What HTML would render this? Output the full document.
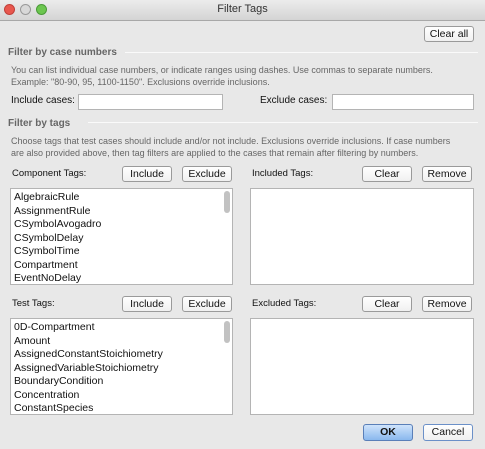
<!DOCTYPE html><html><head><style>
*{margin:0;padding:0;box-sizing:border-box}
body{width:485px;height:449px;background:#e8e8e8;font-family:"Liberation Sans",sans-serif;font-size:10px;color:#111;position:relative;overflow:hidden}
.a{position:absolute;white-space:nowrap}
.tb{position:absolute;left:0;top:0;width:485px;height:21px;background:linear-gradient(#ececec,#d4d4d4);border-bottom:1px solid #a8a8a8;text-align:center;line-height:19px;font-size:11px;color:#333}
.dot{position:absolute;top:4px;width:11px;height:11px;border-radius:50%;border:1px solid #999}
.btn{position:absolute;height:16px;background:linear-gradient(#fff,#f0f0f0);border:1px solid #9a9a9a;border-radius:3px;text-align:center;line-height:14px;font-size:10.5px}
.sec{font-weight:bold;color:#666;font-size:10px}
.ln{position:absolute;height:1px;background:#c4c4c4;border-bottom:1px solid #fafafa}
.desc{color:#666;font-size:9px;line-height:12px}
.box{position:absolute;background:#fff;border:1px solid #b4b4b4}
.inp{position:absolute;background:#fff;border:1px solid #b4b4b4;height:16px}
.items{position:absolute;left:3px;top:2px;line-height:13.5px;font-size:10.5px}
.th{position:absolute;right:2px;top:2px;width:6px;height:22px;background:#c2c2c2;border-radius:3px}
</style></head><body>
<div class="tb">Filter Tags</div>
<div class="dot" style="left:4px;background:#e8574e;border-color:#c0403a"></div>
<div class="dot" style="left:20px;background:#d8d8d8"></div>
<div class="dot" style="left:36px;background:#6cc64f;border-color:#4a9a38"></div>
<div class="btn" style="left:424px;top:26px;width:50px">Clear all</div>
<div class="a sec" style="left:8px;top:47px">Filter by case numbers</div>
<div class="ln" style="left:125px;top:52px;width:353px"></div>
<div class="a desc" style="left:11px;top:64px">You can list individual case numbers, or indicate ranges using dashes. Use commas to separate numbers.<br>Example: "80-90, 95, 1100-1150". Exclusions override inclusions.</div>
<div class="a" style="left:11px;top:95px">Include cases:</div>
<div class="inp" style="left:78px;top:94px;width:145px"></div>
<div class="a" style="left:260px;top:95px">Exclude cases:</div>
<div class="inp" style="left:332px;top:94px;width:142px"></div>
<div class="a sec" style="left:8px;top:118px">Filter by tags</div>
<div class="ln" style="left:88px;top:122px;width:390px"></div>
<div class="a desc" style="left:11px;top:135px">Choose tags that test cases should include and/or not include. Exclusions override inclusions. If case numbers<br>are also provided above, then tag filters are applied to the cases that remain after filtering by numbers.</div>

<div class="a" style="left:12px;top:168px;font-size:9.5px">Component Tags:</div>
<div class="btn" style="left:122px;top:166px;width:50px">Include</div>
<div class="btn" style="left:182px;top:166px;width:50px">Exclude</div>
<div class="a" style="left:252px;top:168px;font-size:9.5px">Included Tags:</div>
<div class="btn" style="left:362px;top:166px;width:50px">Clear</div>
<div class="btn" style="left:422px;top:166px;width:50px">Remove</div>
<div class="box" style="left:10px;top:188px;width:223px;height:97px"><div class="items">AlgebraicRule<br>AssignmentRule<br>CSymbolAvogadro<br>CSymbolDelay<br>CSymbolTime<br>Compartment<br>EventNoDelay</div><div class="th"></div></div>
<div class="box" style="left:250px;top:188px;width:224px;height:97px"></div>

<div class="a" style="left:12px;top:298px;font-size:9.5px">Test Tags:</div>
<div class="btn" style="left:122px;top:296px;width:50px">Include</div>
<div class="btn" style="left:182px;top:296px;width:50px">Exclude</div>
<div class="a" style="left:252px;top:298px;font-size:9.5px">Excluded Tags:</div>
<div class="btn" style="left:362px;top:296px;width:50px">Clear</div>
<div class="btn" style="left:422px;top:296px;width:50px">Remove</div>
<div class="box" style="left:10px;top:318px;width:223px;height:97px"><div class="items">0D-Compartment<br>Amount<br>AssignedConstantStoichiometry<br>AssignedVariableStoichiometry<br>BoundaryCondition<br>Concentration<br>ConstantSpecies</div><div class="th"></div></div>
<div class="box" style="left:250px;top:318px;width:224px;height:97px"></div>

<div class="btn" style="left:363px;top:424px;width:50px;height:17px;line-height:15px;background:linear-gradient(#cfe3fb,#8ab8ee);border-color:#5a7fb8;font-weight:bold">OK</div>
<div class="btn" style="left:423px;top:424px;width:50px;height:17px;line-height:15px;border-color:#6b90c8">Cancel</div>
</body></html>
